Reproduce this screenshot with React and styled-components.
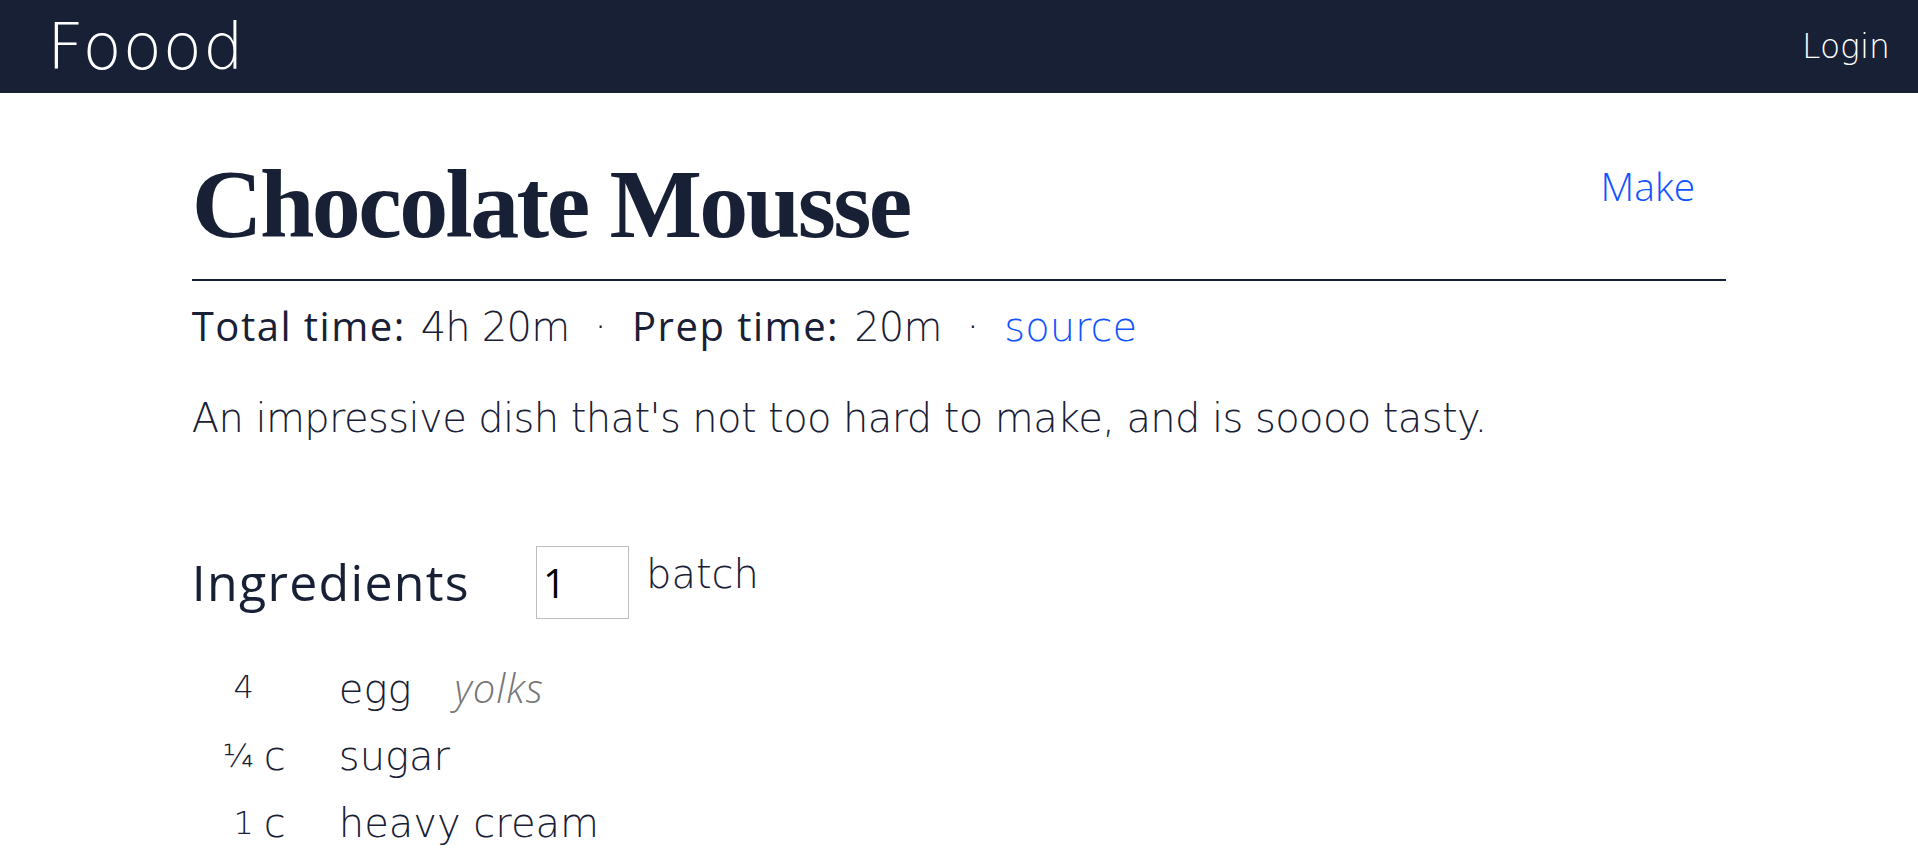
import React from 'react';
import styled, { createGlobalStyle } from 'styled-components';

const GlobalStyle = createGlobalStyle`
  body {
    margin: 0;
    background: #ffffff;
    color: #182036;
    font-family: "DejaVu Sans", "Open Sans", sans-serif;
    font-weight: 200;
  }
`;

const NavBar = styled.header`
  display: flex;
  align-items: center;
  justify-content: space-between;
  height: 93px;
  padding: 0 28px 0 47px;
  background-color: #182036;
  color: #ffffff;
`;

const Brand = styled.div`
  font-size: 64px;
  font-weight: 200;
  line-height: 1;
  letter-spacing: 1px;
`;

const NavLink = styled.a`
  font-size: 33px;
  font-weight: 200;
  line-height: 1;
  color: #ffffff;
  text-decoration: none;
  cursor: pointer;
`;

const Page = styled.main`
  width: 80%;
  margin: 0 auto;
`;

const TitleRow = styled.div`
  display: flex;
  justify-content: space-between;
  align-items: flex-start;
  margin-top: 55px;
  padding-bottom: 18px;
  border-bottom: 2px solid #182036;
`;

const Title = styled.h1`
  margin: 0;
  font-family: "Liberation Serif", "DejaVu Serif", serif;
  font-weight: 700;
  font-size: 98px;
  line-height: 1.15;
  letter-spacing: -2.6px;
`;

const ActionLink = styled.a`
  margin: 18px 31px 0 0;
  font-family: "Open Sans", sans-serif;
  font-size: 39px;
  font-weight: 300;
  line-height: 1;
  color: #1054ff;
  text-decoration: none;
  cursor: pointer;
`;

const MetaLine = styled.div`
  display: flex;
  align-items: baseline;
  margin-top: 15px;
  font-size: 40px;
  line-height: 1.5;
`;

const MetaLabel = styled.span`
  font-family: "Open Sans", sans-serif;
  font-weight: 500;
  letter-spacing: 1.5px;
  margin-right: 15px;
`;

const MetaValue = styled.span`
  letter-spacing: -0.8px;
`;

const Dot = styled.span`
  margin: 0 25px;
`;

const SourceLink = styled.a`
  color: #1054ff;
  text-decoration: none;
`;

const Description = styled.p`
  margin: 31px 0 0;
  font-size: 40px;
  line-height: 1.5;
  letter-spacing: -0.6px;
`;

const SectionHead = styled.div`
  display: flex;
  align-items: flex-start;
  margin-top: 98px;
`;

const SectionTitle = styled.h2`
  margin: 6px 0 0;
  font-family: "Open Sans", sans-serif;
  font-size: 50px;
  font-weight: 400;
  letter-spacing: 1.3px;
  line-height: 1.2;
`;

const BatchInput = styled.input`
  box-sizing: border-box;
  width: 93px;
  height: 73px;
  margin-left: 66px;
  padding: 0 0 0 6px;
  border: 1px solid #bdbdbd;
  font-family: "Open Sans", sans-serif;
  font-size: 40px;
  font-weight: 500;
  color: #000000;
  outline: none;
`;

const BatchLabel = styled.span`
  margin: 4px 0 0 17px;
  font-size: 40px;
  line-height: 1.2;
`;

const IngredientList = styled.div`
  display: grid;
  grid-template-columns: 62px 85px 1fr;
  margin-top: 35px;
  line-height: 67px;
  font-size: 40px;
`;

const Qty = styled.span`
  text-align: right;
  font-size: 32px;
`;

const Unit = styled.span`
  padding-left: 10px;
`;

const Name = styled.span``;

const Note = styled.em`
  margin-left: 43px;
  font-family: "Open Sans", sans-serif;
  font-weight: 300;
  letter-spacing: 1px;
  color: #777777;
`;

const ingredients = [
  { qty: '4', unit: '', name: 'egg', note: 'yolks' },
  { qty: '¼', unit: 'c', name: 'sugar' },
  { qty: '1', unit: 'c', name: 'heavy cream' },
];

export default function App() {
  return (
    <>
      <GlobalStyle />
      <NavBar>
        <Brand>Foood</Brand>
        <NavLink>Login</NavLink>
      </NavBar>
      <Page>
        <TitleRow>
          <Title>Chocolate Mousse</Title>
          <ActionLink>Make</ActionLink>
        </TitleRow>
        <MetaLine>
          <MetaLabel>Total time:</MetaLabel>
          <MetaValue>4h 20m</MetaValue>
          <Dot>·</Dot>
          <MetaLabel>Prep time:</MetaLabel>
          <MetaValue>20m</MetaValue>
          <Dot>·</Dot>
          <SourceLink>source</SourceLink>
        </MetaLine>
        <Description>
          An impressive dish that's not too hard to make, and is soooo tasty.
        </Description>
        <SectionHead>
          <SectionTitle>Ingredients</SectionTitle>
          <BatchInput type="number" defaultValue={1} />
          <BatchLabel>batch</BatchLabel>
        </SectionHead>
        <IngredientList>
          {ingredients.map((item) => (
            <React.Fragment key={item.name}>
              <Qty>{item.qty}</Qty>
              <Unit>{item.unit}</Unit>
              <Name>
                {item.name}
                {item.note && <Note>{item.note}</Note>}
              </Name>
            </React.Fragment>
          ))}
        </IngredientList>
      </Page>
    </>
  );
}
